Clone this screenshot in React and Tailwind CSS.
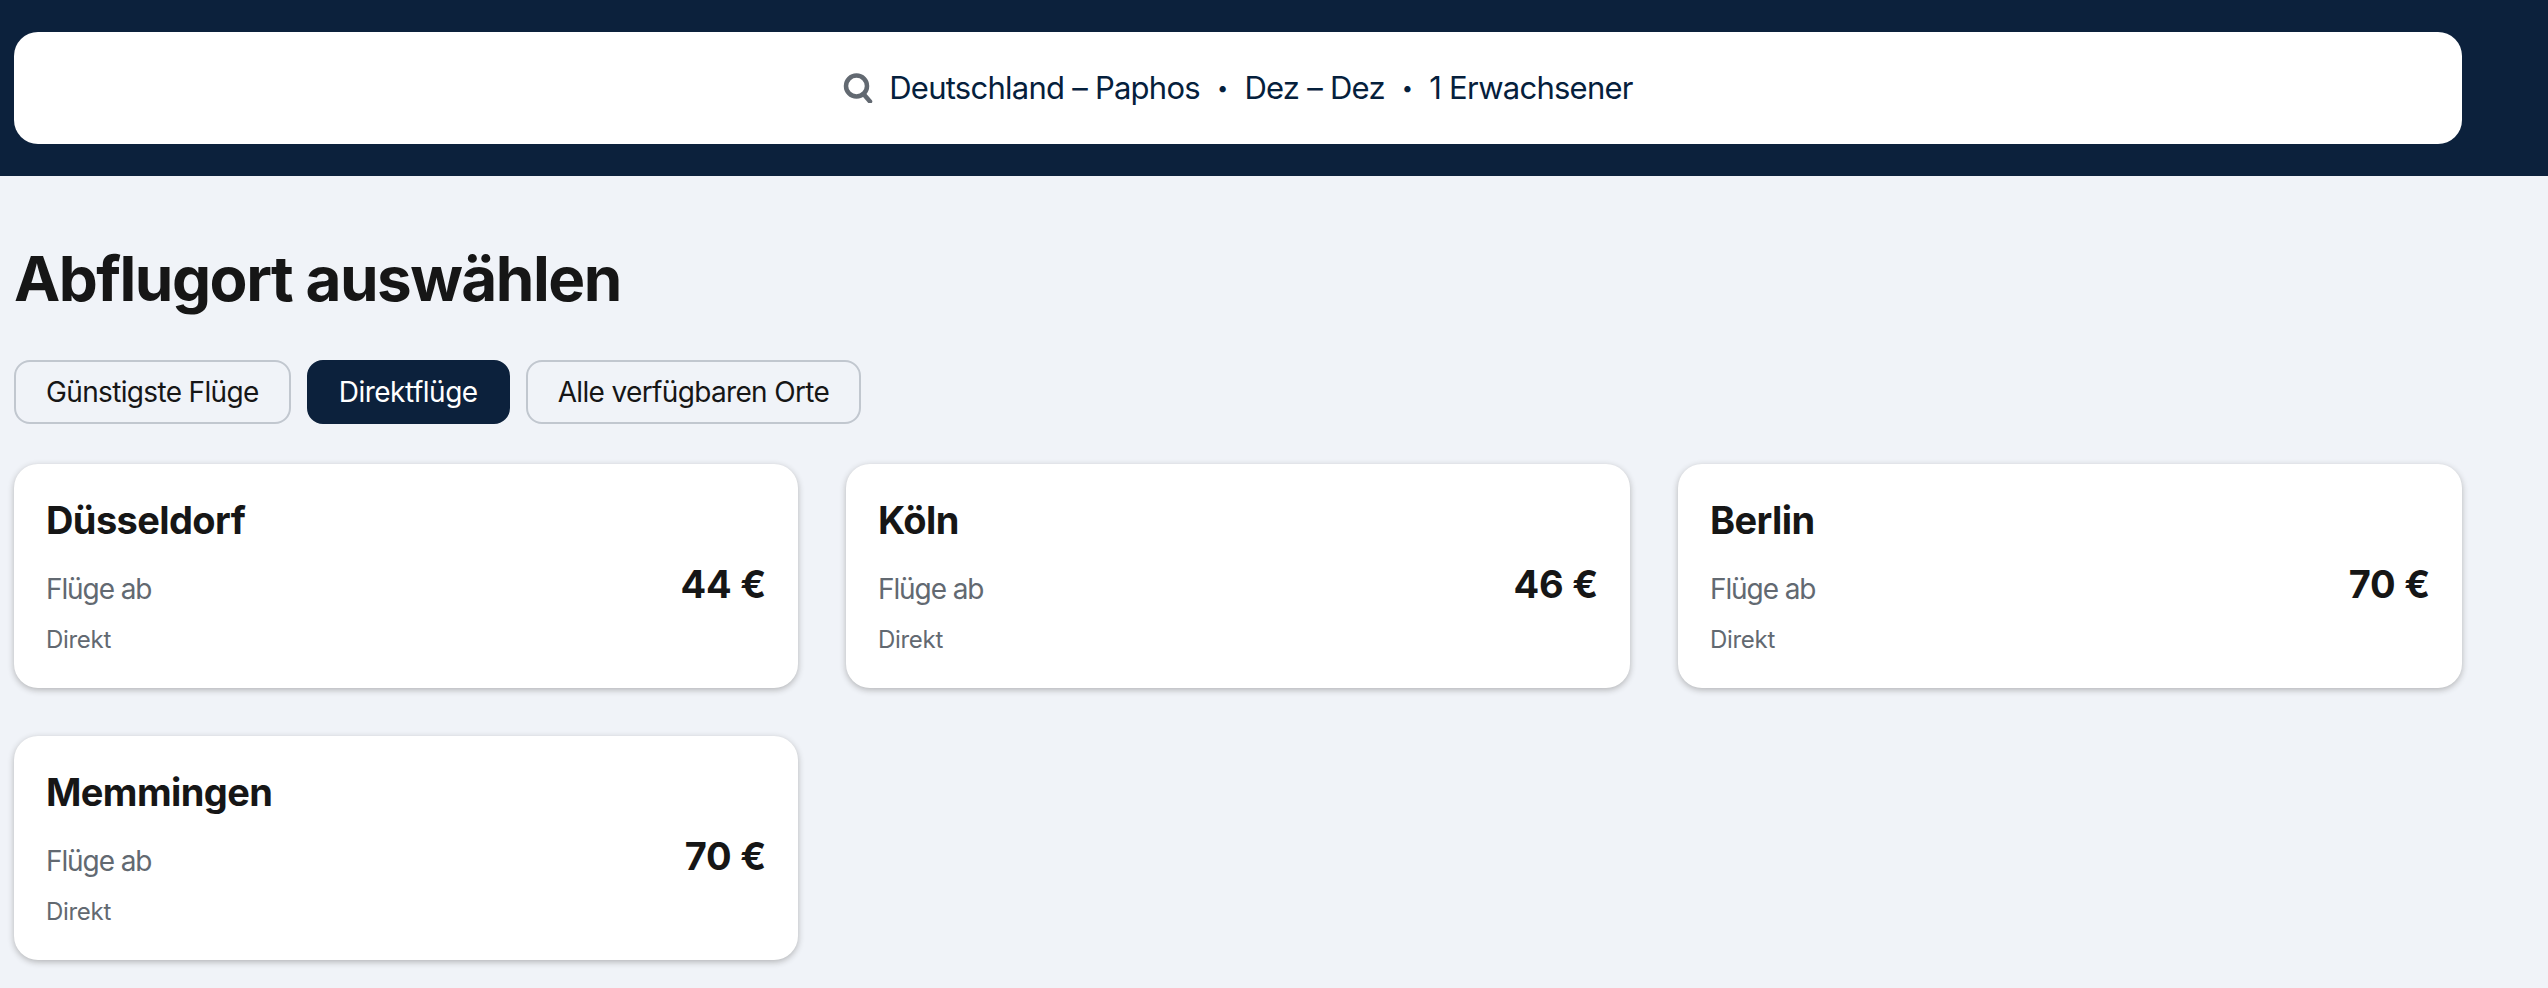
const cards = [
  ["Düsseldorf", "44 €"],
  ["Köln", "46 €"],
  ["Berlin", "70 €"],
  ["Memmingen", "70 €"],
];

const font = "[font-family:Inter,'Liberation_Sans',sans-serif]";

function Card({ city, price }) {
  return (
    <div className="h-[224px] rounded-[24px] bg-white px-8 pt-8 shadow-[0_2px_6px_rgba(37,32,31,0.3)]">
      <div className="text-[38px] leading-[48px] font-bold tracking-[-0.6px] text-[#161616]">{city}</div>
      <div className="mt-4 flex items-start justify-between">
        <div className="mt-[9px] text-[28px] leading-[40px] tracking-[-1.1px] text-[#626971]">Flüge ab</div>
        <div className="text-[38px] leading-[48px] font-bold tracking-[-0.2px] text-[#161616]">{price}</div>
      </div>
      <div className="mt-[15px] text-[24px] leading-[32px] tracking-[-0.3px] text-[#626971]">Direkt</div>
    </div>
  );
}

function Pill({ children, active }) {
  return (
    <div
      className={
        active
          ? "flex h-16 items-center rounded-[16px] border-2 border-[#0c213c] bg-[#0c213c] px-[30px] text-[28px] tracking-[-0.5px] text-white"
          : "flex h-16 items-center rounded-[16px] border-2 border-[#c1c7cf] px-[30px] text-[28px] tracking-[-0.65px] text-[#161616]"
      }
    >
      {children}
    </div>
  );
}

export default function App() {
  return (
    <div className={`min-h-[988px] bg-[#f0f3f8] ${font}`}>
      <div className="h-[176px] bg-[#0c213c] pt-8 pl-[14px]">
        <div className="flex h-[112px] w-[2448px] items-center justify-center gap-[16px] rounded-[24px] bg-white text-[31px] tracking-[-0.75px] text-[#05203c]">
          <svg width="30" height="30" viewBox="0 0 30 30" fill="none" className="shrink-0">
            <circle cx="13.5" cy="13" r="10.5" stroke="#626971" strokeWidth="4.5" />
            <path d="M20.5 21 L27 28.5" stroke="#626971" strokeWidth="4.5" strokeLinecap="round" />
          </svg>
          <div className="flex items-center">
            <span>Deutschland – Paphos</span>
            <span className="mx-[17px] text-[20px]">•</span>
            <span>Dez – Dez</span>
            <span className="mx-[17px] text-[20px]">•</span>
            <span>1 Erwachsener</span>
          </div>
        </div>
      </div>
      <div className="w-[2448px] ml-[14px]">
        <h1 className="mt-[63px] text-[62px] leading-[80px] font-bold tracking-[-1.5px] text-[#161616]">Abflugort auswählen</h1>
        <div className="mt-[41px] flex gap-4">
          <Pill>Günstigste Flüge</Pill>
          <Pill active>Direktflüge</Pill>
          <Pill>Alle verfügbaren Orte</Pill>
        </div>
        <div className="mt-10 grid grid-cols-3 gap-12">
          {cards.map(([c, p]) => (
            <Card key={c} city={c} price={p} />
          ))}
        </div>
      </div>
    </div>
  );
}
